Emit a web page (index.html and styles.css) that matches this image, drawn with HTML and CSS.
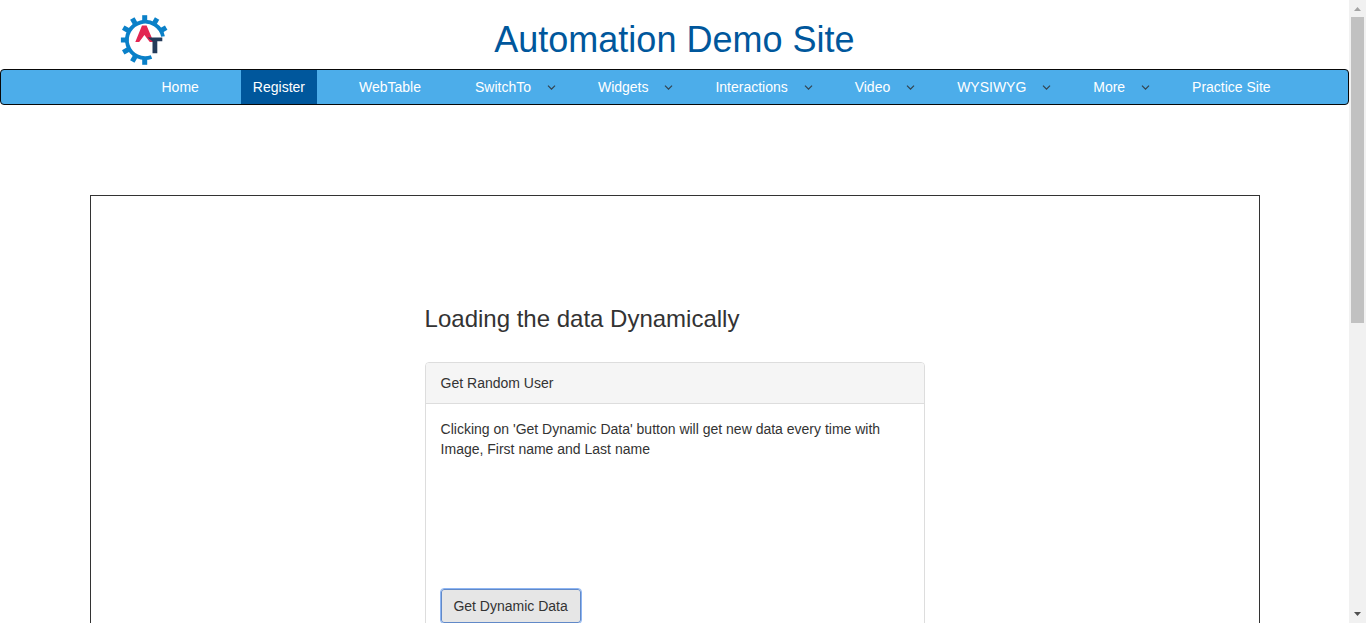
FILE: index.html
```html
<!DOCTYPE html>
<html lang="en">
<head>
<meta charset="utf-8">
<title>Automation Demo Site</title>
<link rel="stylesheet" href="styles.css">
</head>
<body>
<svg class="defs" width="0" height="0"><symbol id="chevron" viewBox="0 0 9 7"><path d="M1 1.6 4.5 5.1 8 1.6" fill="none" stroke="#33424d" stroke-width="1.2"/></symbol></svg>
<div class="window">
  <div class="page">
    <header class="header">
      <svg class="logo" viewBox="0 0 52 54">
        <g fill="none" stroke="#0a80c8">
          <path d="M43 22.5A18.2 18.2 0 1 0 31.5 43" stroke-width="3.8"/>
          <g stroke-width="5">
            <path id="tooth" d="M24.7 8.5V1.2"/>
            <use href="#tooth" transform="rotate(30 24.7 26)"/>
            <use href="#tooth" transform="rotate(60 24.7 26)"/>
            <use href="#tooth" transform="rotate(180 24.7 26)"/>
            <use href="#tooth" transform="rotate(210 24.7 26)"/>
            <use href="#tooth" transform="rotate(240 24.7 26)"/>
            <use href="#tooth" transform="translate(1)rotate(270 24.7 26)"/>
            <use href="#tooth" transform="rotate(300 24.7 26)"/>
            <use href="#tooth" transform="rotate(330 24.7 26)"/>
          </g>
        </g>
        <path d="M15.3 28 22 11.5h4.6L33.6 28h-3.8L24.4 21 19.2 28Z" fill="#e32652"/>
        <path d="M27.5 23.5H42.3v3.8h-5V39.2h-4.8V27.3Z" fill="#243b5a"/>
      </svg>
      <h1 class="title">Automation Demo Site</h1>
    </header>
    <nav class="nav">
      <div class="item"><a class="link">Home</a></div>
      <div class="item active"><a class="link">Register</a></div>
      <div class="item"><a class="link">WebTable</a></div>
      <div class="item"><a class="link">SwitchTo</a><svg class="chevron"><use href="#chevron"/></svg></div>
      <div class="item"><a class="link">Widgets</a><svg class="chevron"><use href="#chevron"/></svg></div>
      <div class="item"><a class="link">Interactions</a><svg class="chevron"><use href="#chevron"/></svg></div>
      <div class="item"><a class="link">Video</a><svg class="chevron"><use href="#chevron"/></svg></div>
      <div class="item"><a class="link">WYSIWYG</a><svg class="chevron"><use href="#chevron"/></svg></div>
      <div class="item"><a class="link">More</a><svg class="chevron"><use href="#chevron"/></svg></div>
      <div class="item"><a class="link">Practice Site</a></div>
    </nav>
    <main class="container">
      <section class="content">
        <h2 class="heading">Loading the data Dynamically</h2>
        <div class="panel">
          <div class="panel-heading">Get Random User</div>
          <div class="panel-body">
            <p class="text">Clicking on 'Get Dynamic Data' button will get new data every time with Image, First name and Last name</p>
            <button class="button">Get Dynamic Data</button>
          </div>
        </div>
      </section>
    </main>
  </div>
  <div class="scrollbar">
    <svg class="arrow" viewBox="0 0 17 17"><path d="M5 11 8.5 7 12 11Z" fill="#a3a3a3"/></svg>
    <div class="thumb"></div>
    <svg class="arrow arrow-down" viewBox="0 0 17 17"><path d="M5 6H12L8.5 10Z" fill="#505050"/></svg>
  </div>
</div>
</body>
</html>
```
FILE: styles.css
```css
* { box-sizing: border-box; }
body {
  margin: 0;
  overflow: hidden;
  background: #fff;
  color: #333;
  font: 14px/20px "Liberation Sans", Arial, sans-serif;
}
.defs { position: absolute; }
.window { display: flex; height: 623px; overflow: hidden; }
.page { width: 1349px; height: 623px; overflow: hidden; }
.header { display: flex; height: 69px; padding: 14px 0 0 120px; }
.logo { width: 52px; height: 54px; flex: none; }
.title {
  margin: 6px 0 0 322.3px;
  color: #00579c;
  font-size: 36px;
  font-weight: 400;
  line-height: 40px;
  white-space: nowrap;
}
.nav {
  display: flex;
  gap: 30px;
  height: 36px;
  padding-left: 148.5px;
  border: 1px solid #080808;
  border-radius: 4px;
  background: #4cadea;
}
.item { display: flex; align-items: center; height: 34px; white-space: nowrap; }
.link { padding: 0 12px; color: #fff; }
.active { background: #00579c; }
.chevron { width: 9px; height: 7px; margin: 1px 0 0 3.9px; }
.container {
  width: 1170px;
  height: 700px;
  margin: 90px 0 0 90px;
  border: 1px solid #333;
}
.content { width: 500px; margin: 110px 0 0 333.6px; }
.heading { margin: 0 0 30px; font-size: 24px; font-weight: 400; line-height: 26px; }
.panel { height: 400px; border: 1px solid #ddd; border-radius: 4px; }
.panel-heading {
  height: 41px;
  padding: 10px 15px;
  border-bottom: 1px solid #ddd;
  border-radius: 3px 3px 0 0;
  background: #f5f5f5;
}
.panel-body { padding: 15px; }
.text { height: 170px; margin: 0; }
.button {
  display: block;
  width: 140px;
  height: 34px;
  padding: 0;
  border: 1px solid #6189c8;
  border-radius: 3px;
  outline: 1px solid #8db5f3;
  background: #e6e6e6;
  color: #333;
  font: inherit;
}
.scrollbar { display: flex; flex-direction: column; width: 17px; background: #f1f1f1; }
.arrow { width: 17px; height: 17px; flex: none; }
.thumb { width: 13px; height: 306px; margin-left: 2px; background: #c1c1c1; }
.arrow-down { margin-top: auto; }
```
